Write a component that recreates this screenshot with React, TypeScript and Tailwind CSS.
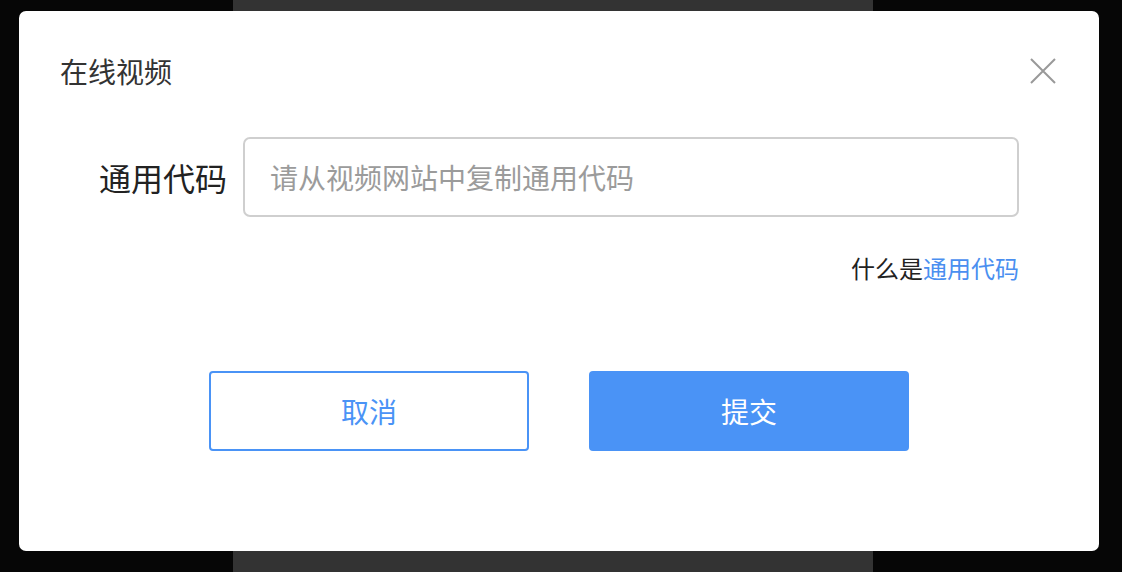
import React from "react";

export default function App() {
  return (
    <div
      className="relative w-[1122px] h-[572px] bg-[#060606] flex overflow-hidden"
      style={{ fontFamily: '"Noto Sans CJK SC", "Noto Sans", sans-serif' }}
    >
      <div className="w-[640px] h-full bg-[#333333] ml-[233px]" />
      <div className="absolute left-[19px] top-[11px] w-[1080px] h-[540px] bg-white rounded-[7px] flex flex-col">
        <div className="flex items-center justify-between pl-[41px] pr-[43px] pt-[40px] h-[80px]">
          <span className="text-[28px] leading-[40px] text-[#333]">在线视频</span>
          <svg width="26" height="26" viewBox="0 0 26 26">
            <path d="M1 1 L25 25 M25 1 L1 25" stroke="#999" strokeWidth="2" fill="none" />
          </svg>
        </div>
        <div className="flex items-center mt-[46px] pl-[80px]">
          <span className="text-[32px] leading-[40px] text-[#222] w-[129px]">通用代码</span>
          <div className="ml-[15px] w-[776px] h-[80px] border-2 border-[#cfcfcf] rounded-[7px] flex items-center pl-[25px]">
            <span className="text-[28px] text-[#9b9b9b]">请从视频网站中复制通用代码</span>
          </div>
        </div>
        <div className="flex justify-end pr-[80px] mt-[35px]">
          <span className="text-[24px] leading-[32px] text-[#222]">
            什么是<span className="text-[#4a8ff0]">通用代码</span>
          </span>
        </div>
        <div className="flex justify-center gap-[60px] mt-[87px]">
          <button className="w-[320px] h-[80px] border-2 border-[#4a93f6] rounded-[4px] text-[28px] text-[#4a93f6] bg-white">
            取消
          </button>
          <button className="w-[320px] h-[80px] rounded-[4px] text-[28px] text-white bg-[#4a93f6]">
            提交
          </button>
        </div>
      </div>
    </div>
  );
}
